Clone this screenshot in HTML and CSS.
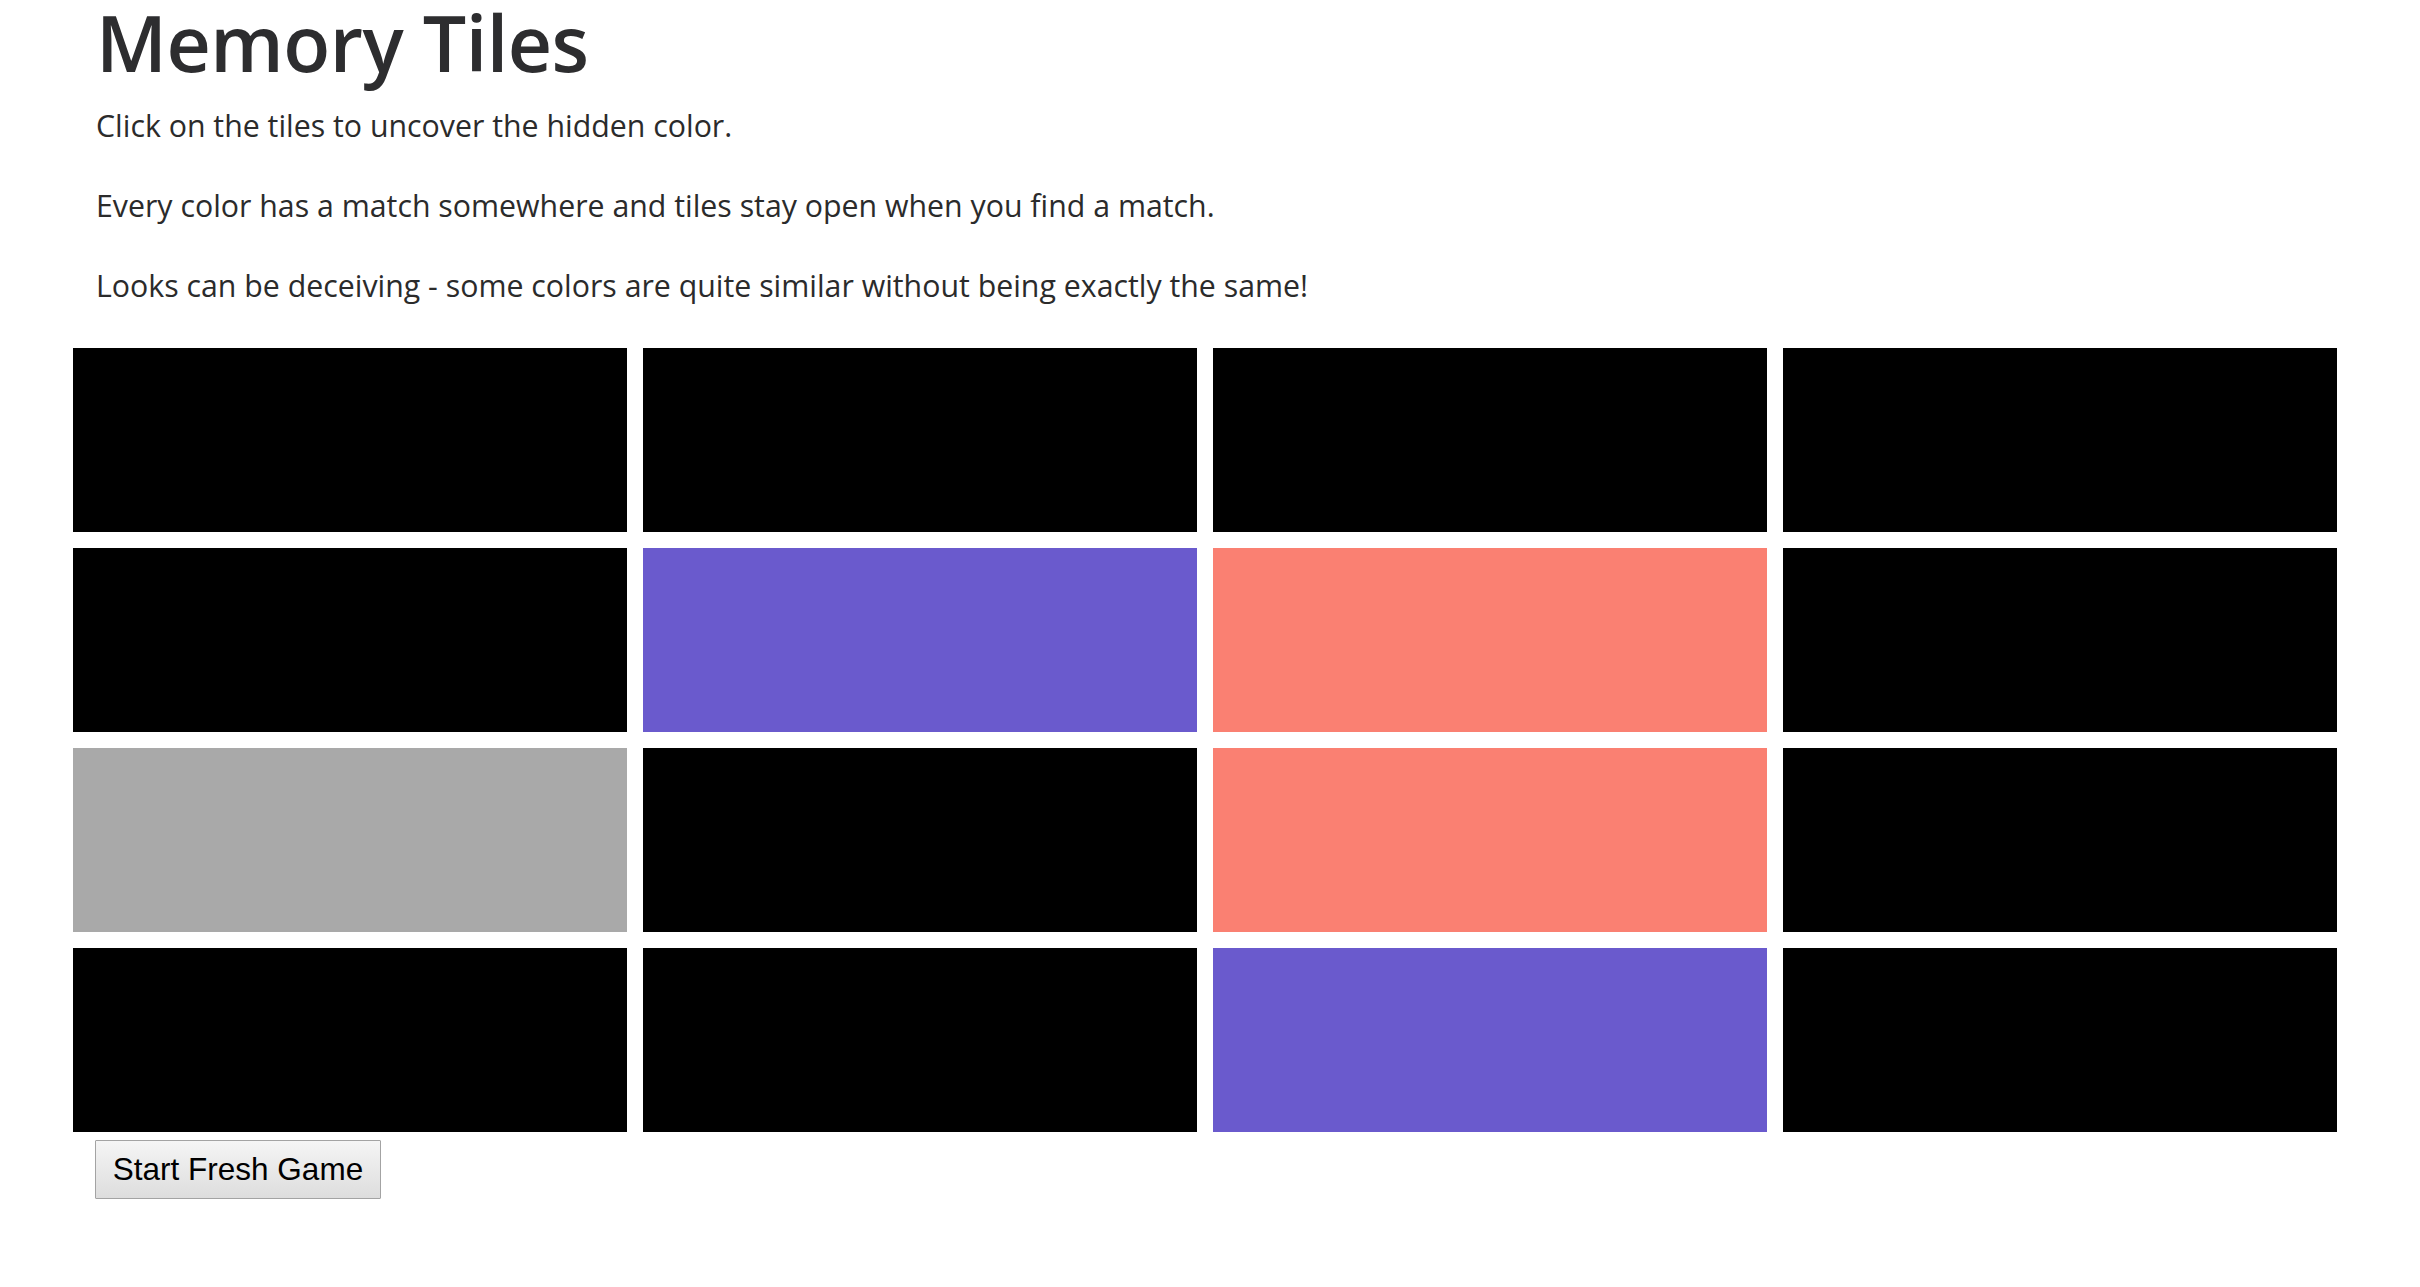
FILE: index.html
```html
<!DOCTYPE html>
<html lang="en">
<head>
<meta charset="utf-8">
<title>Memory Tiles</title>
<link rel="stylesheet" href="styles.css">
</head>
<body>
<main class="page">
  <header class="intro">
    <h1 class="title">Memory Tiles</h1>
    <p class="lead">Click on the tiles to uncover the hidden color.</p>
    <p class="lead">Every color has a match somewhere and tiles stay open when you find a match.</p>
    <p class="lead">Looks can be deceiving - some colors are quite similar without being exactly the same!</p>
  </header>
  <section class="board">
    <div class="tile"></div>
    <div class="tile"></div>
    <div class="tile"></div>
    <div class="tile"></div>
    <div class="tile"></div>
    <div class="tile tile-slateblue"></div>
    <div class="tile tile-salmon"></div>
    <div class="tile"></div>
    <div class="tile tile-gray"></div>
    <div class="tile"></div>
    <div class="tile tile-salmon"></div>
    <div class="tile"></div>
    <div class="tile"></div>
    <div class="tile"></div>
    <div class="tile tile-slateblue"></div>
    <div class="tile"></div>
  </section>
  <div class="controls">
    <button class="restart" type="button">Start Fresh Game</button>
  </div>
</main>
</body>
</html>
```

FILE: styles.css
```css
html, body {
  margin: 0;
  padding: 0;
  background: #ffffff;
}

body {
  font-family: "Open Sans", "Noto Sans", sans-serif;
  color: #2b2b2b;
}

.page {
  padding-left: 73px;
}

.intro {
  padding-left: 23px;
}

.title {
  margin: 0;
  font-size: 77px;
  line-height: 86px;
  font-weight: 600;
  color: #2d2d2f;
  letter-spacing: -0.5px;
}

.lead {
  margin: 19.5px 0 0 0;
  font-size: 30.3px;
  line-height: 40px;
  color: #2b2b2b;
}

.lead + .lead {
  margin-top: 40px;
}

.board {
  margin-top: 42.5px;
  display: grid;
  grid-template-columns: repeat(4, 554px);
  grid-auto-rows: 184px;
  gap: 16px;
}

.tile {
  background: #000000;
}

.tile-slateblue {
  background: #6a5acd;
}

.tile-salmon {
  background: #fa8072;
}

.tile-gray {
  background: #a9a9a9;
}

.controls {
  padding-left: 22px;
  padding-top: 8px;
}

.restart {
  box-sizing: border-box;
  width: 286px;
  height: 59px;
  padding: 0;
  font-family: "Liberation Sans", Arial, sans-serif;
  font-size: 31.5px;
  color: #000000;
  background: linear-gradient(#f5f5f5, #dddddd);
  border: 1px solid #a3a3a3;
  border-radius: 1px;
}
```
